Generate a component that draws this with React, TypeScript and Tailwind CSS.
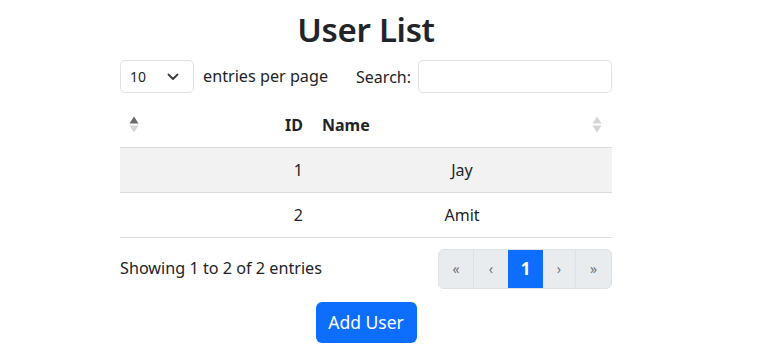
import React from "react";

const font = { fontFamily: '"Noto Sans", "Open Sans", sans-serif' };

function SortIcon({ up, down }: { up: string; down: string }) {
  return (
    <svg width="10" height="17" viewBox="0 0 10 17">
      <path d="M5 0.5 L9.5 7.5 L0.5 7.5 Z" fill={up} />
      <path d="M5 16.5 L9.5 9.5 L0.5 9.5 Z" fill={down} />
    </svg>
  );
}

export default function App() {
  return (
    <div className="w-[760px] h-[359px] bg-white text-[#212529] text-[16px]" style={font}>
      <div className="ml-[120px] w-[492px] flex flex-col">
        <h1 className="text-center text-[33px] font-semibold leading-[40px] mt-[10px] mb-[10px] tracking-[-0.3px]">User List</h1>
        <div className="flex items-center h-[33px]">
          <div className="w-[74px] h-[33px] border border-[#dee2e6] rounded-[5px] flex items-center pl-[9px] pr-[14px] justify-between">
            <span className="text-[14px]">10</span>
            <svg width="12" height="8" viewBox="0 0 12 8">
              <path d="M1.5 1.5 L6 6 L10.5 1.5" fill="none" stroke="#343a40" strokeWidth="1.8" strokeLinecap="round" strokeLinejoin="round" />
            </svg>
          </div>
          <span className="ml-[9px] text-[16.2px]">entries per page</span>
          <div className="ml-auto flex items-center">
            <span className="text-[16px] mr-[7px]">Search:</span>
            <div className="w-[194px] h-[33px] border border-[#dee2e6] rounded-[5px]" />
          </div>
        </div>
        <table className="mt-[10px] w-full border-collapse">
          <thead>
            <tr className="h-[44px] border-b border-[#dcdcdc]">
              <th className="w-[192px] text-right pr-[9px] relative font-bold">
                <span className="absolute left-[9px] top-[13px]">
                  <SortIcon up="#6b6b6b" down="#d4d4d4" />
                </span>
                ID
              </th>
              <th className="text-left pl-[10px] relative font-bold">
                Name
                <span className="absolute right-[10px] top-[13px]">
                  <SortIcon up="#d4d4d4" down="#d4d4d4" />
                </span>
              </th>
            </tr>
          </thead>
          <tbody>
            <tr className="h-[45px] bg-[#f2f2f2] border-b border-[#dcdcdc]">
              <td className="text-right pr-[9px]">1</td>
              <td className="text-center">Jay</td>
            </tr>
            <tr className="h-[45px] border-b border-[#dcdcdc]">
              <td className="text-right pr-[9px]">2</td>
              <td className="text-center">Amit</td>
            </tr>
          </tbody>
        </table>
        <div className="flex items-center justify-between mt-[11px]">
          <span className="text-[16.2px]">Showing 1 to 2 of 2 entries</span>
          <div className="flex h-[40px] rounded-[6px] overflow-hidden border border-[#dee2e6] bg-[#e9ecef] text-[#6c757d] text-[14px]">
            <div className="w-[35px] flex items-center justify-center border-r border-[#dee2e6]">«</div>
            <div className="w-[34px] flex items-center justify-center">‹</div>
            <div className="w-[35px] flex items-center justify-center bg-[#0d6efd] text-white text-[17px] font-bold">1</div>
            <div className="w-[33px] flex items-center justify-center border-r border-[#dee2e6]">›</div>
            <div className="w-[35px] flex items-center justify-center">»</div>
          </div>
        </div>
        <div className="flex justify-center mt-[13px]">
          <button className="w-[101px] h-[41px] bg-[#0d6efd] text-white rounded-[6px] text-[17.5px]">Add User</button>
        </div>
      </div>
    </div>
  );
}
